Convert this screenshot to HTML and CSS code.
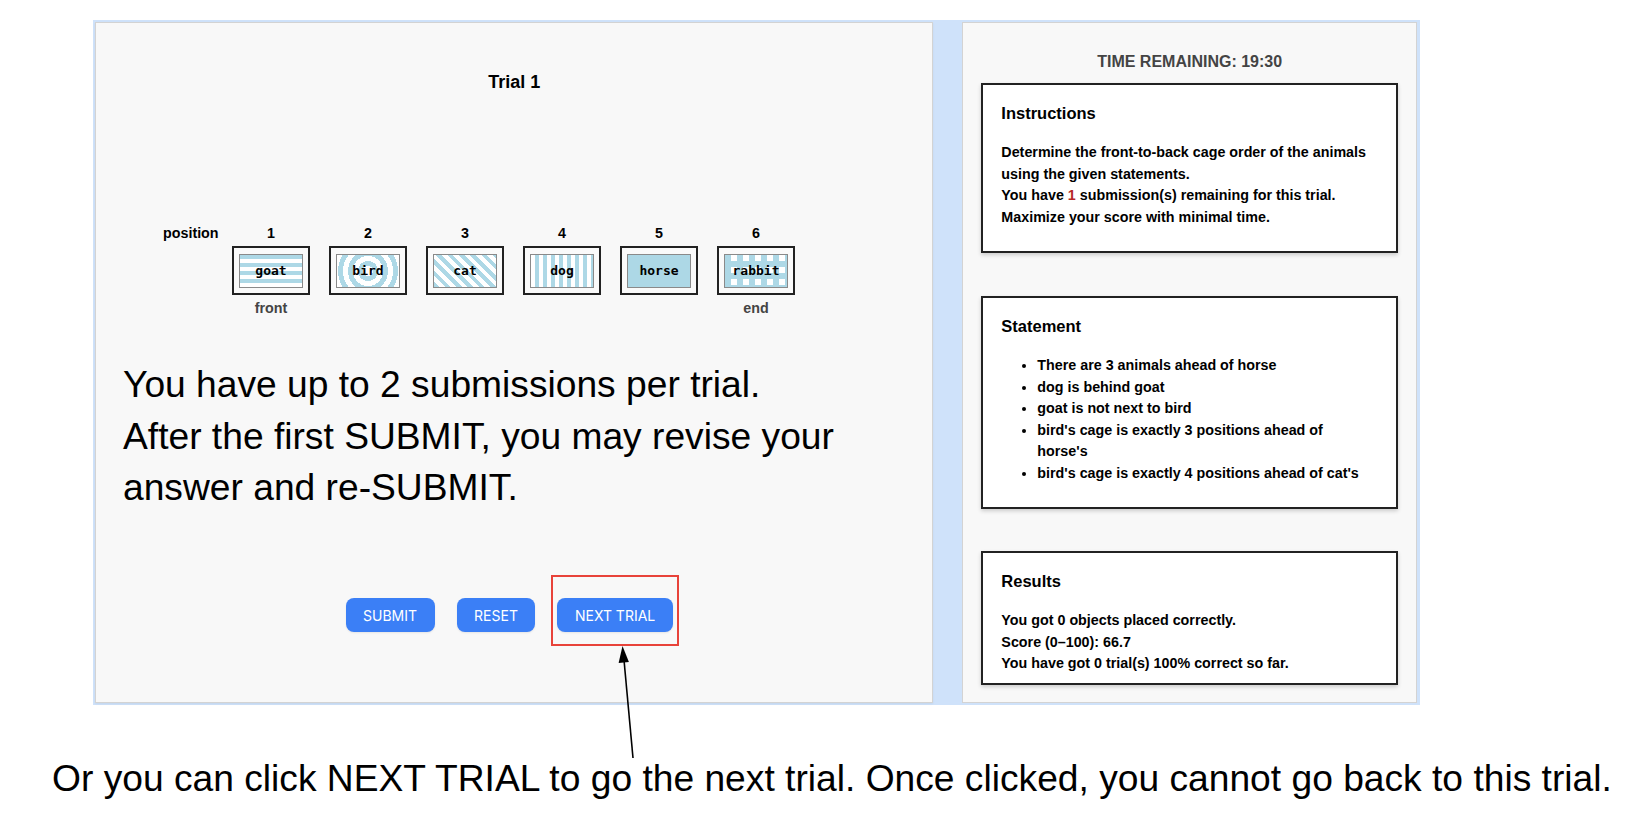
FILE: index.html
```html
<!DOCTYPE html>
<html lang="en">
<head>
<meta charset="utf-8">
<title>Trial 1</title>
<link rel="stylesheet" href="styles.css">
</head>
<body>
<div class="stage">
  <div class="frame">
    <section class="task">
      <h1 class="trial-title">Trial 1</h1>
      <div class="cages">
        <div class="pos-label">position</div>
        <div class="num">1</div>
        <div class="num">2</div>
        <div class="num">3</div>
        <div class="num">4</div>
        <div class="num">5</div>
        <div class="num">6</div>

        <div></div>
        <div class="cage"><div class="pat goat">goat</div></div>
        <div class="cage"><div class="pat bird">bird</div></div>
        <div class="cage"><div class="pat cat">cat</div></div>
        <div class="cage"><div class="pat dog">dog</div></div>
        <div class="cage"><div class="pat horse">horse</div></div>
        <div class="cage"><div class="pat rabbit">rabbit</div></div>

        <div></div>
        <div class="end-label">front</div>
        <div></div>
        <div></div>
        <div></div>
        <div></div>
        <div class="end-label">end</div>
      </div>
      <p class="rules">You have up to 2 submissions per trial.<br>After the first SUBMIT, you may revise your answer and re-SUBMIT.</p>
      <div class="actions">
        <button class="btn">SUBMIT</button>
        <button class="btn">RESET</button>
        <button class="btn">NEXT TRIAL</button>
      </div>
    </section>
    <aside class="side">
      <div class="timer">TIME REMAINING: 19:30</div>
      <div class="card">
        <h2 class="card-title">Instructions</h2>
        <div class="card-body">
          Determine the front-to-back cage order of the animals using the given statements.<br>
          You have <span class="hl">1</span> submission(s) remaining for this trial.<br>
          Maximize your score with minimal time.
        </div>
      </div>
      <div class="card gap">
        <h2 class="card-title">Statement</h2>
        <ul class="card-list">
          <li>There are 3 animals ahead of horse</li>
          <li>dog is behind goat</li>
          <li>goat is not next to bird</li>
          <li>bird's cage is exactly 3 positions ahead of horse's</li>
          <li>bird's cage is exactly 4 positions ahead of cat's</li>
        </ul>
      </div>
      <div class="card gap results">
        <h2 class="card-title">Results</h2>
        <div class="card-body">
          You got 0 objects placed correctly.<br>
          Score (0–100): 66.7<br>
          You have got 0 trial(s) 100% correct so far.
        </div>
      </div>
    </aside>
  </div>
  <p class="note">Or you can click NEXT TRIAL to go the next trial. Once clicked, you cannot go back to this trial.</p>
  <div class="callout-box"></div>
  <svg class="callout-arrow" width="1632" height="822" viewBox="0 0 1632 822">
    <line x1="633" y1="758" x2="624" y2="660" stroke="#000" stroke-width="1.6"/>
    <polygon points="622.5,646 628.9,662 618.6,663" fill="#000"/>
  </svg>
</div>
</body>
</html>
```

FILE: styles.css
```css
* { box-sizing: border-box; }

html, body {
  margin: 0;
  padding: 0;
  background: #ffffff;
}

body {
  font-family: "Liberation Sans", Arial, Helvetica, sans-serif;
  color: #000;
}

.stage {
  position: relative;
  width: 1632px;
  height: 822px;
  padding-top: 20px;
}

.frame {
  margin-left: 93px;
  width: 1327px;
  height: 685px;
  background: #cfe2fa;
  padding: 2px 3px 2px 2px;
  display: flex;
  gap: 29px;
}

.task {
  width: 839px;
  height: 100%;
  background: #f8f8f8;
  border: 1px solid #d3d3d3;
  box-shadow: 0 1px 2px rgba(0,0,0,0.06);
  padding: 48px 27px 0 27px;
  display: flex;
  flex-direction: column;
}

.trial-title {
  margin: 0;
  font-size: 18px;
  line-height: 22px;
  font-weight: bold;
  text-align: center;
}

.cages {
  margin-top: 131px;
  margin-left: 40px;
  display: grid;
  grid-template-columns: 50px repeat(6, 78px);
  grid-template-rows: 18px 49px 18px;
  column-gap: 19px;
  row-gap: 4px;
  font-size: 14.3px;
  font-weight: bold;
  line-height: 18px;
}

.pos-label {
  white-space: nowrap;
}

.num {
  text-align: center;
}

.end-label {
  text-align: center;
  color: #444;
}

.cage {
  border: 2px solid #222;
  background: #fafafa;
  display: flex;
  align-items: center;
  justify-content: center;
}

.pat {
  width: 64px;
  height: 34px;
  border: 1px solid #8a8a8a;
  display: flex;
  align-items: center;
  justify-content: center;
  font-family: "DejaVu Sans Mono", "Liberation Mono", monospace;
  font-weight: bold;
  font-size: 13px;
  color: #000;
}

.goat {
  background: repeating-linear-gradient(180deg, #add8e6 0 4px, #ffffff 4px 8px);
}

.bird {
  background: repeating-radial-gradient(circle at 50% 50%, #ffffff 0 5px, #add8e6 5px 10px);
}

.cat {
  background: repeating-linear-gradient(45deg, #add8e6 0 4px, #ffffff 4px 8px);
}

.dog {
  background: repeating-linear-gradient(90deg, #ffffff 0 4px, #add8e6 4px 8px);
}

.horse {
  background: #add8e6;
}

.rabbit {
  background: conic-gradient(#ffffff 0 25%, #add8e6 0 100%) 0 0 / 12px 12px;
}

.rules {
  margin: 42px 0 0 0;
  font-size: 37.2px;
  line-height: 51.5px;
  color: #000;
}

.actions {
  margin-top: 84.5px;
  display: flex;
  justify-content: center;
  gap: 22px;
  padding-right: 10px;
}

.btn {
  height: 34px;
  padding: 0 17.5px;
  border: none;
  border-radius: 8px;
  background: #3b7ff6;
  color: #ffffff;
  font-family: "Inter", "Roboto", sans-serif;
  font-size: 14px;
  font-weight: 400;
  box-shadow: 0 1px 2px rgba(0,0,0,0.08);
}

.side {
  width: 455px;
  height: 100%;
  background: #f8f8f8;
  border: 1px solid #d3d3d3;
  padding: 29px 18px 0 18px;
}

.timer {
  text-align: center;
  font-size: 16px;
  line-height: 20px;
  font-weight: bold;
  color: #444;
  margin-bottom: 11px;
}

.card {
  background: #ffffff;
  border: 2px solid #222;
  box-shadow: 0 2px 4px rgba(0,0,0,0.18);
  padding: 18px 24px 23px 18px;
}

.card.gap {
  margin-top: 43px;
}

.card.results {
  margin-top: 42px;
  padding-bottom: 8px;
}

.card-title {
  margin: 0 0 19px 0;
  font-size: 16.5px;
  line-height: 20px;
  font-weight: bold;
}

.card-body {
  font-size: 14.3px;
  line-height: 21.5px;
  font-weight: bold;
}

.hl {
  color: #b52626;
}

.card-list {
  margin: 0;
  padding-left: 36px;
  font-size: 14.3px;
  line-height: 21.5px;
  font-weight: bold;
}

.note {
  margin: 52px 0 0 52px;
  font-size: 37.2px;
  line-height: 42px;
  white-space: nowrap;
}

.callout-box {
  position: absolute;
  left: 551px;
  top: 575px;
  width: 128px;
  height: 71px;
  border: 2px solid #e8433a;
}

.callout-arrow {
  position: absolute;
  left: 0;
  top: 0;
  pointer-events: none;
}
```
